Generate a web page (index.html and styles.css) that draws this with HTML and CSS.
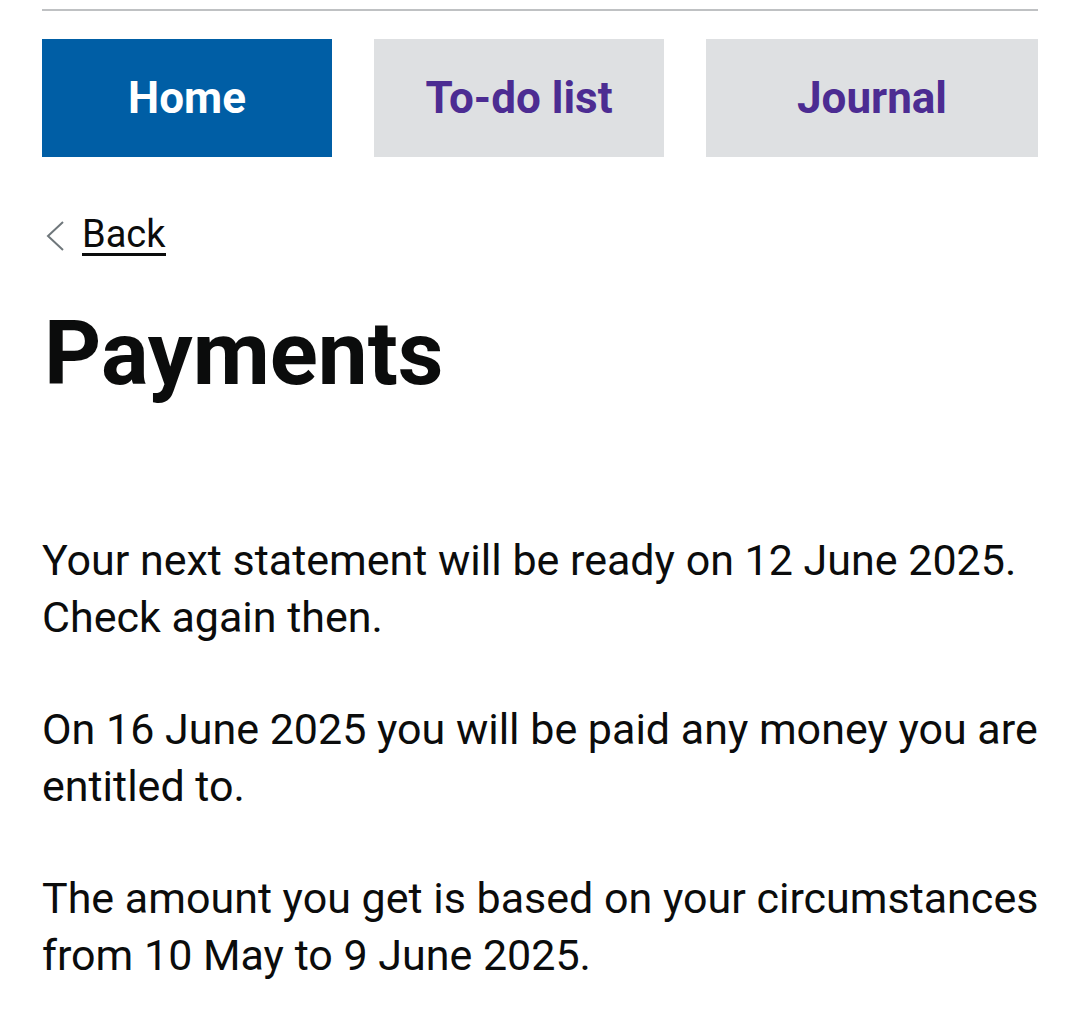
FILE: index.html
```html
<!DOCTYPE html>
<html lang="en">
<head>
<meta charset="utf-8">
<title>Payments</title>
<link rel="stylesheet" href="styles.css">
</head>
<body>
<div class="page">
  <div class="rule"></div>
  <nav class="tabs">
    <a class="tab tab-active" href="#">Home</a>
    <a class="tab" href="#">To-do list</a>
    <a class="tab tab-wide" href="#">Journal</a>
  </nav>
  <a class="back" href="#">
    <svg class="back-icon" width="20" height="32" viewBox="0 0 20 32"><path d="M18 2 L3 16 L18 30" fill="none" stroke="#6f777b" stroke-width="2"/></svg>
    <span class="back-text">Back</span>
  </a>
  <h1 class="title">Payments</h1>
  <div class="content">
    <p class="para">Your next statement will be ready on 12 June 2025. Check again then.</p>
    <p class="para">On 16 June 2025 you will be paid any money you are entitled to.</p>
    <p class="para">The amount you get is based on your circumstances from 10 May to 9 June 2025.</p>
  </div>
</div>
</body>
</html>
```

FILE: styles.css
```css
html, body {
  margin: 0;
  padding: 0;
  background: #ffffff;
}
body {
  font-family: Roboto, "Noto Sans", sans-serif;
  color: #0b0c0c;
}
.page {
  width: 996px;
  margin-left: 42px;
  padding-top: 9px;
}
.rule {
  height: 2px;
  background: #bfc1c3;
}
.tabs {
  display: grid;
  grid-template-columns: 290px 290px 332px;
  column-gap: 42px;
  margin-top: 28px;
}
.tab {
  height: 118px;
  display: flex;
  align-items: center;
  justify-content: center;
  background: #dee0e2;
  color: #4c2c92;
  font-weight: 700;
  font-size: 44px;
  text-decoration: none;
}
.tab-active {
  background: #005ea5;
  color: #ffffff;
}
.back {
  display: flex;
  align-items: center;
  gap: 17px;
  margin-top: 58px;
  margin-left: 3px;
  color: #0b0c0c;
  text-decoration: none;
  width: max-content;
}
.back-icon {
  display: block;
}
.back-text {
  font-size: 38px;
  line-height: 38px;
  border-bottom: 3px solid #0b0c0c;
}
.title {
  margin: 46px 0 0 2px;
  font-size: 89px;
  line-height: 104px;
  font-weight: 700;
}
.content {
  margin-top: 126px;
  margin-right: -30px;
}
.para {
  margin: 0 0 55px 0;
  font-size: 43px;
  line-height: 57px;
}
```
